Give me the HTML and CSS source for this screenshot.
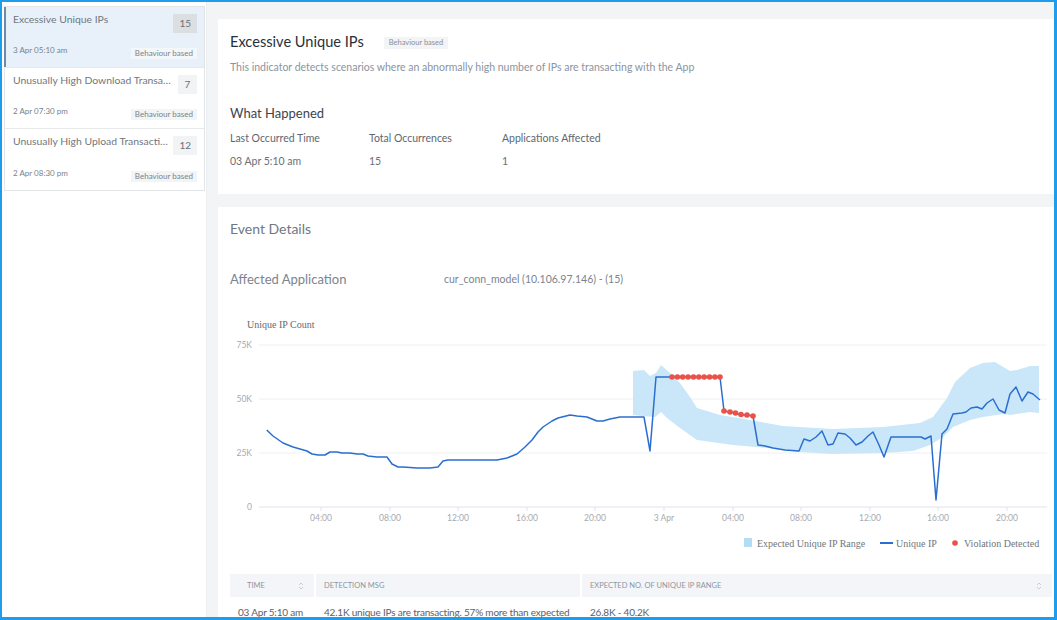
FILE: index.html
```html
<!DOCTYPE html>
<html lang="en">
<head>
<meta charset="utf-8">
<title>Excessive Unique IPs</title>
<link rel="stylesheet" href="styles.css">
</head>
<body>
<div class="frame">
  <aside class="sidebar">
    <div class="list">
      <div class="item selected">
        <div class="item-top">
          <span class="item-title">Excessive Unique IPs</span>
          <span class="count dark">15</span>
        </div>
        <div class="item-bottom">
          <span class="item-date">3 Apr 05:10 am</span>
          <span class="tag">Behaviour based</span>
        </div>
      </div>
      <div class="item">
        <div class="item-top">
          <span class="item-title">Unusually High Download Transactions</span>
          <span class="count">7</span>
        </div>
        <div class="item-bottom">
          <span class="item-date">2 Apr 07:30 pm</span>
          <span class="tag">Behaviour based</span>
        </div>
      </div>
      <div class="item">
        <div class="item-top">
          <span class="item-title">Unusually High Upload Transactions</span>
          <span class="count">12</span>
        </div>
        <div class="item-bottom">
          <span class="item-date">2 Apr 08:30 pm</span>
          <span class="tag">Behaviour based</span>
        </div>
      </div>
    </div>
  </aside>

  <main class="main">
    <section class="card summary">
      <div class="title-row">
        <h1 class="title">Excessive Unique IPs</h1>
        <span class="tag tag-title">Behaviour based</span>
      </div>
      <p class="desc">This indicator detects scenarios where an abnormally high number of IPs are transacting with the App</p>
      <h2 class="what">What Happened</h2>
      <div class="stats">
        <span class="stat-label">Last Occurred Time</span>
        <span class="stat-label">Total Occurrences</span>
        <span class="stat-label">Applications Affected</span>
        <span class="stat-value">03 Apr 5:10 am</span>
        <span class="stat-value">15</span>
        <span class="stat-value">1</span>
      </div>
    </section>

    <section class="card details">
      <h2 class="event-title">Event Details</h2>
      <div class="affected">
        <span class="affected-label">Affected Application</span>
        <span class="affected-value">cur_conn_model (10.106.97.146) - (15)</span>
      </div>

      <svg class="chart" width="822" height="250" viewBox="230 312 822 250" xmlns="http://www.w3.org/2000/svg">
        <text class="chart-title" x="247" y="328">Unique IP Count</text>
        <g class="grid">
          <line x1="259" y1="345" x2="1047" y2="345"/>
          <line x1="259" y1="399" x2="1047" y2="399"/>
          <line x1="259" y1="453" x2="1047" y2="453"/>
        </g>
        <line class="axis" x1="259" y1="507" x2="1047" y2="507"/>
        <g class="ticks">
          <line x1="321" y1="507" x2="321" y2="511"/>
          <line x1="390" y1="507" x2="390" y2="511"/>
          <line x1="458" y1="507" x2="458" y2="511"/>
          <line x1="527" y1="507" x2="527" y2="511"/>
          <line x1="595" y1="507" x2="595" y2="511"/>
          <line x1="664" y1="507" x2="664" y2="511"/>
          <line x1="733" y1="507" x2="733" y2="511"/>
          <line x1="801" y1="507" x2="801" y2="511"/>
          <line x1="870" y1="507" x2="870" y2="511"/>
          <line x1="938" y1="507" x2="938" y2="511"/>
          <line x1="1007" y1="507" x2="1007" y2="511"/>
        </g>
        <g class="ylabels">
          <text x="252" y="348">75K</text>
          <text x="252" y="402">50K</text>
          <text x="252" y="456">25K</text>
          <text x="252" y="510">0</text>
        </g>
        <g class="xlabels">
          <text x="321" y="521">04:00</text>
          <text x="390" y="521">08:00</text>
          <text x="458" y="521">12:00</text>
          <text x="527" y="521">16:00</text>
          <text x="595" y="521">20:00</text>
          <text x="664" y="521">3 Apr</text>
          <text x="733" y="521">04:00</text>
          <text x="801" y="521">08:00</text>
          <text x="870" y="521">12:00</text>
          <text x="938" y="521">16:00</text>
          <text x="1007" y="521">20:00</text>
        </g>
        <polygon class="band" points="633,371 644,370 650,376 656,373 661,365 670,373 680,383 690,397 697,408 720,415 750,420 783,426 833,429 883,427 920,423 933,417 947,398 955,382 970,368 983,363 995,362 1010,371 1017,370 1030,366 1039,366 1039,413 1030,412 1010,415 1003,414 983,417 970,420 953,427 943,437 930,445 913,451 883,453 833,454 800,452 767,448 733,445 697,440 680,428 667,418 661,412 655,417 643,416 633,415"/>
        <polyline class="series" points="266.7,430 273,436 283,443 293,447 307,451 312,454 318,455 325,455 330,452 337,452 342,453 350,453 357,454 363,454 368,456 377,457 387,457 392,464 398,467 403,467 417,468 430,468 438,467 443,461 448,460 460,460 477,460 497,460 507,458 517,454 525,447 532,440 538,432 543,427 552,421 558,418 570,415 577,416 587,417 597,421 603,421 610,419 620,417 633,417 644,417 650,451 656,377 670,377 720,377 724,411 730,412 735,413 741,415 747,415 753,416 758,445 765,446 773,448 785,450 799,451 804,439 810,441 816,437 822,431 828,445 833,444 838,433 845,434 850,438 856,445 862,442 868,436 873,432 879,445 884,457 891,437 903,437 915,437 921,437 925,439 931,436 936,500 942,434 947,429 953,414 962,413 966,412 971,408 977,407 982,409 987,403 993,399 999,410 1005,413 1010,394 1016,387 1022,401 1028,392 1033,394 1040,400"/>
        <g class="dots">
          <circle cx="672" cy="377" r="2.8"/>
          <circle cx="677.4" cy="377" r="2.8"/>
          <circle cx="682.7" cy="377" r="2.8"/>
          <circle cx="688.1" cy="377" r="2.8"/>
          <circle cx="693.5" cy="377" r="2.8"/>
          <circle cx="698.8" cy="377" r="2.8"/>
          <circle cx="704.2" cy="377" r="2.8"/>
          <circle cx="709.6" cy="377" r="2.8"/>
          <circle cx="714.9" cy="377" r="2.8"/>
          <circle cx="720" cy="377" r="2.8"/>
          <circle cx="724" cy="411" r="2.8"/>
          <circle cx="730" cy="412" r="2.8"/>
          <circle cx="735.5" cy="413" r="2.8"/>
          <circle cx="741" cy="414.5" r="2.8"/>
          <circle cx="747" cy="415" r="2.8"/>
          <circle cx="753" cy="416" r="2.8"/>
        </g>
        <g class="legend">
          <rect x="744" y="538" width="8" height="9" class="legend-band"/>
          <text x="757" y="547">Expected Unique IP Range</text>
          <line x1="880" y1="543" x2="893" y2="543" class="legend-line"/>
          <text x="896" y="547">Unique IP</text>
          <circle cx="955" cy="543" r="2.8" class="legend-dot"/>
          <text x="964" y="547">Violation Detected</text>
        </g>
      </svg>

      <div class="table">
        <div class="th th-time">
          <span>Time</span>
          <svg class="sort" width="6" height="10" viewBox="0 0 6 10"><path d="M1 4 L3 2 L5 4 M1 6 L3 8 L5 6"/></svg>
        </div>
        <div class="th"><span>Detection Msg</span></div>
        <div class="th">
          <span>Expected No. of Unique IP Range</span>
          <svg class="sort" width="6" height="10" viewBox="0 0 6 10"><path d="M1 4 L3 2 L5 4 M1 6 L3 8 L5 6"/></svg>
        </div>
        <div class="td">03 Apr 5:10 am</div>
        <div class="td">42.1K unique IPs are transacting. 57% more than expected</div>
        <div class="td">26.8K - 40.2K</div>
      </div>
    </section>
  </main>
</div>
</body>
</html>
```

FILE: styles.css
```css
* { box-sizing: border-box; }

html, body {
  margin: 0;
  padding: 0;
  background: #ffffff;
}

body {
  font-family: Lato, "Open Sans", "Liberation Sans", sans-serif;
  color: #5a6068;
}

h1, h2, p { margin: 0; font-weight: normal; }

.frame {
  width: 1057px;
  height: 620px;
  border: 2px solid #1f9ded;
  border-right-width: 3px;
  border-bottom-width: 3px;
  display: flex;
  overflow: hidden;
  background: #ffffff;
}

/* ---------- sidebar ---------- */
.sidebar {
  width: 205px;
  flex: none;
  background: #ffffff;
  border-right: 1px solid #eceeef;
  padding: 4px 1px 0 2px;
}

.list {
  border: 1px solid #e3e6e9;
}

.item {
  height: 61px;
  padding: 7px 7px 8px 8px;
  border-bottom: 1px solid #e6e8ea;
  display: flex;
  flex-direction: column;
  justify-content: space-between;
}
.item:last-child { border-bottom: none; }

.item.selected {
  background: #e8f1fa;
  box-shadow: inset 2px 0 0 #6f8aa6;
  margin-left: -1px;
  padding-left: 9px;
}

.item-top {
  display: flex;
  align-items: flex-start;
  justify-content: space-between;
  gap: 4px;
}

.item-title {
  font-size: 10.4px;
  line-height: 14px;
  margin-top: -2px;
  color: #70767e;
  white-space: nowrap;
  overflow: hidden;
  text-overflow: ellipsis;
  min-width: 0;
  flex: 1;
}

.count {
  flex: none;
  min-width: 19px;
  height: 19px;
  line-height: 19px;
  padding: 0 6px;
  text-align: center;
  font-size: 10px;
  color: #6a7078;
  background: #f1f3f4;
}
.count.dark { background: #dcdfe2; }

.item-bottom {
  display: flex;
  align-items: flex-end;
  justify-content: space-between;
}

.item-date {
  font-size: 8px;
  line-height: 11px;
  padding-bottom: 3px;
  color: #7b8189;
}

.tag {
  font-size: 8px;
  line-height: 11px;
  height: 11px;
  padding: 0 4px;
  background: #f2f4f5;
  color: #7c8288;
  white-space: nowrap;
}
.item.selected .tag { background: #f4f7f9; }

/* ---------- main ---------- */
.main {
  flex: 1;
  min-width: 0;
  background: #f2f4f5;
  padding: 17px 0 0 11px;
  display: flex;
  flex-direction: column;
  gap: 13px;
}

.card {
  background: #ffffff;
}

.summary {
  height: 175px;
  flex: none;
  padding: 13px 12px 0 12px;
}

.title-row {
  display: flex;
  align-items: center;
  gap: 20px;
  height: 20px;
}

.title {
  font-size: 14.6px;
  font-weight: 400;
  color: #2a3039;
  line-height: 20px;
}

.tag-title {
  font-size: 7.5px;
  height: 12px;
  line-height: 12px;
  padding: 0 5px;
  color: #8a9099;
  background: #f2f4f5;
  margin-top: 1px;
}

.desc {
  margin-top: 8px;
  font-size: 10.5px;
  line-height: 14px;
  color: #8b94a1;
}

.what {
  margin-top: 30px;
  font-size: 13px;
  line-height: 18px;
  color: #3b4452;
}

.stats {
  margin-top: 9px;
  display: grid;
  grid-template-columns: 139px 133px auto;
  row-gap: 9px;
  font-size: 10.5px;
  line-height: 14px;
}
.stat-label { color: #5d6672; }
.stat-value { color: #6a7078; }

.details {
  flex: 1;
  padding: 12px 2px 0 12px;
}

.event-title {
  font-size: 14px;
  line-height: 20px;
  color: #6f7884;
}

.affected {
  margin-top: 30px;
  display: flex;
  align-items: center;
  line-height: 20px;
}
.affected-label {
  width: 214px;
  font-size: 13px;
  color: #7b8491;
}
.affected-value {
  font-size: 10.5px;
  color: #7b8491;
}

/* ---------- chart ---------- */
.chart {
  display: block;
  margin-top: 23px;
}

.chart-title {
  font-family: "Liberation Serif", serif;
  font-size: 10px;
  fill: #66696e;
}

.grid line { stroke: #edf0f2; stroke-width: 1; }
.axis { stroke: #dde4ee; stroke-width: 1.2; }
.ticks line { stroke: #dde4ee; stroke-width: 1; }

.ylabels text {
  font-size: 8.5px;
  fill: #a6aaaf;
  text-anchor: end;
}
.xlabels text {
  font-size: 8.5px;
  fill: #a6aaaf;
  text-anchor: middle;
}

.band { fill: #c9e7f9; }
.series {
  fill: none;
  stroke: #2a6fcf;
  stroke-width: 1.5;
  stroke-linejoin: round;
}
.dots circle { fill: #ec5147; }

.legend text {
  font-family: "Liberation Serif", serif;
  font-size: 10px;
  fill: #70757b;
}
.legend-band { fill: #b3dcf5; }
.legend-line { stroke: #2a6fcf; stroke-width: 2; }
.legend-dot { fill: #ec5147; }

/* ---------- table ---------- */
.table {
  margin-top: 12px;
  display: grid;
  grid-template-columns: 84px 264px 1fr;
  column-gap: 2px;
}

.th {
  height: 23px;
  background: #f3f5f8;
  display: flex;
  align-items: center;
  justify-content: space-between;
  padding: 0 10px 0 8px;
  font-size: 7.5px;
  text-transform: uppercase;
  color: #8d96a1;
}
.th-time { padding-left: 17px; }

.sort path {
  fill: none;
  stroke: #c9ced4;
  stroke-width: 1;
}

.td {
  padding: 8px 0 0 8px;
  font-size: 10px;
  letter-spacing: -0.2px;
  line-height: 14px;
  color: #5b6169;
  white-space: nowrap;
}
```
